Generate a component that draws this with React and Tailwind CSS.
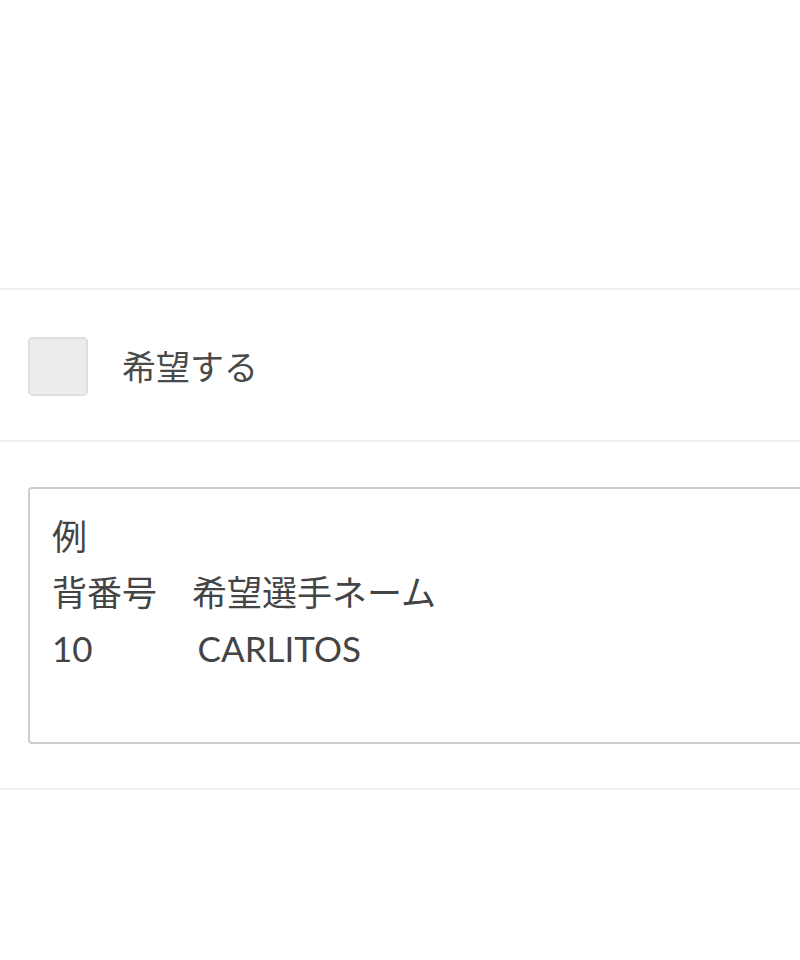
export default function App() {
  const font = { fontFamily: 'Lato, "Noto Sans CJK JP", sans-serif' }
  return (
    <div className="w-[800px] h-[960px] overflow-hidden bg-white text-[#444]" style={font}>
      <div className="h-[288px]" />
      <div className="border-t-2 border-[#efefef] h-[152px] flex items-center pl-[28px]">
        <div className="mt-[3px] w-[60px] h-[59px] rounded-[5px] bg-[#ececec] border-2 border-[#dedede]" />
        <span className="ml-[34px] mt-[2px] text-[34px] text-[#4a4a4a]">希望する</span>
      </div>
      <div className="border-t-2 border-[#efefef] border-b-2 pt-[45px] pb-[44px] pl-[28px]">
        <div className="w-[860px] h-[257px] rounded-[4px] border-2 border-[#cdcdcd] pl-[22px] pt-[19px] text-[35px] leading-[56px] text-[#444] whitespace-pre">
          <div>例</div>
          <div>背番号　希望選手ネーム</div>
          <div>10　　　CARLITOS</div>
        </div>
      </div>
    </div>
  )
}
